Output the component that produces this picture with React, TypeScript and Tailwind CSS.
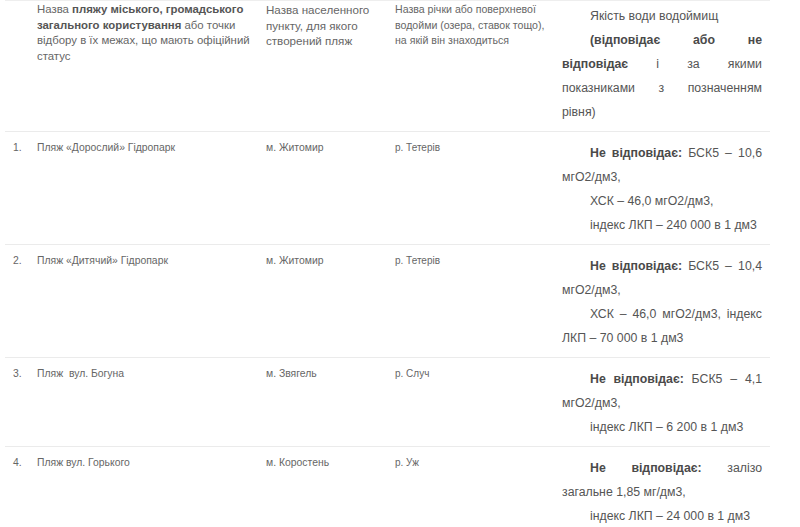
import React from "react";

const J = "block text-justify [text-align-last:justify]";
const L = "block text-left";

function Q({ lines }: { lines: { t: React.ReactNode; j?: boolean; i?: boolean }[] }) {
  return (
    <div className="text-[12.3px] leading-[24px] text-[#555]">
      {lines.map((l, k) => (
        <span key={k} className={`${l.j ? J : L} ${l.i ? "pl-[28px]" : ""} whitespace-nowrap`}>
          {l.t}
        </span>
      ))}
    </div>
  );
}

const B = ({ children }: { children: React.ReactNode }) => (
  <b className="font-bold text-[#4a4a4a]">{children}</b>
);

const rows = [
  {
    n: "1.",
    name: "Пляж «Дорослий» Гідропарк",
    city: "м. Житомир",
    river: "р. Тетерів",
    q: [
      { t: <><B>Не відповідає:</B> БСК5 – 10,6</>, j: true, i: true },
      { t: "мгO2/дм3," },
      { t: "ХСК – 46,0 мгO2/дм3,", i: true },
      { t: "індекс ЛКП – 240 000 в 1 дм3", i: true },
    ],
  },
  {
    n: "2.",
    name: "Пляж «Дитячий» Гідропарк",
    city: "м. Житомир",
    river: "р. Тетерів",
    q: [
      { t: <><B>Не відповідає:</B> БСК5 – 10,4</>, j: true, i: true },
      { t: "мгO2/дм3," },
      { t: "ХСК – 46,0 мгO2/дм3, індекс", j: true, i: true },
      { t: "ЛКП – 70 000 в 1 дм3" },
    ],
  },
  {
    n: "3.",
    name: "Пляж  вул. Богуна",
    city: "м. Звягель",
    river: "р. Случ",
    q: [
      { t: <><B>Не відповідає:</B> БСК5 – 4,1</>, j: true, i: true },
      { t: "мгO2/дм3," },
      { t: "індекс ЛКП – 6 200 в 1 дм3", i: true },
    ],
  },
  {
    n: "4.",
    name: "Пляж вул. Горького",
    city: "м. Коростень",
    river: "р. Уж",
    q: [
      { t: <><B>Не</B> <B>відповідає:</B> залізо</>, j: true, i: true },
      { t: "загальне 1,85 мг/дм3," },
      { t: "індекс ЛКП – 24 000 в 1 дм3", i: true },
    ],
  },
];

export default function App() {
  return (
    <div className="w-[800px] h-[527px] overflow-hidden bg-white" style={{ fontFamily: '"Liberation Sans", Arial, sans-serif' }}>
      <div className="ml-[5px] w-[765px] border-t border-[#eeeeee]">
        <div className="flex border-b border-[#ebebeb] pt-[1px] pb-[7px]">
          <div className="w-[24px]" />
          <div className="w-[229px] px-[8px] text-[11.4px] leading-[15.5px] text-[#666]">
            Назва <b className="font-bold text-[#555]">пляжу міського, громадського загального користування</b> або точки відбору в їх межах, що мають офіційний статус
          </div>
          <div className="w-[129px] px-[8px] text-[11.6px] leading-[15.5px] text-[#666]">
            Назва населенного пункту, для якого створений пляж
          </div>
          <div className="w-[167px] px-[8px] text-[10.6px] leading-[15.5px] text-[#666]">
            Назва річки або поверхневої водойми (озера, ставок тощо), на якій він знаходиться
          </div>
          <div className="w-[216px] px-[8px] pt-[2px]">
            <Q
              lines={[
                { t: "Якість води водоймищ", i: true },
                { t: <B>(відповідає або не</B>, j: true, i: true },
                { t: <><B>відповідає</B> і за якими</>, j: true },
                { t: "показниками з позначенням", j: true },
                { t: "рівня)" },
              ]}
            />
          </div>
        </div>
        {rows.map((r) => (
          <div key={r.n} className="flex border-b border-[#ebebeb] pt-[8px] pb-[7px] last:pb-[1px]">
            <div className="w-[24px] pl-[8px] text-[10.4px] leading-[16px] text-[#666]">{r.n}</div>
            <div className="w-[229px] px-[8px] text-[10.4px] leading-[16px] text-[#666] whitespace-pre">{r.name}</div>
            <div className="w-[129px] px-[8px] text-[10.4px] leading-[16px] text-[#666]">{r.city}</div>
            <div className="w-[167px] px-[8px] text-[10px] leading-[16px] text-[#666]">{r.river}</div>
            <div className="w-[216px] px-[8px] pt-[1px]">
              <Q lines={r.q} />
            </div>
          </div>
        ))}
      </div>
    </div>
  );
}
